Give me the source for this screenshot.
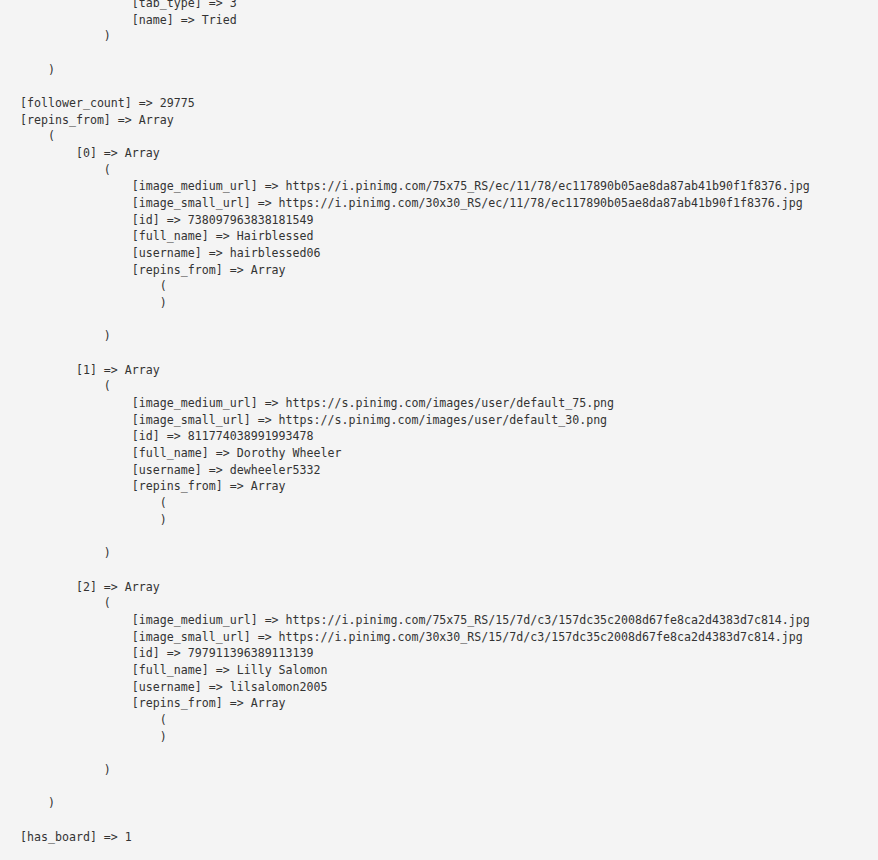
const dump = `                [tab_type] => 3
                [name] => Tried
            )

    )

[follower_count] => 29775
[repins_from] => Array
    (
        [0] => Array
            (
                [image_medium_url] => https://i.pinimg.com/75x75_RS/ec/11/78/ec117890b05ae8da87ab41b90f1f8376.jpg
                [image_small_url] => https://i.pinimg.com/30x30_RS/ec/11/78/ec117890b05ae8da87ab41b90f1f8376.jpg
                [id] => 738097963838181549
                [full_name] => Hairblessed
                [username] => hairblessed06
                [repins_from] => Array
                    (
                    )

            )

        [1] => Array
            (
                [image_medium_url] => https://s.pinimg.com/images/user/default_75.png
                [image_small_url] => https://s.pinimg.com/images/user/default_30.png
                [id] => 811774038991993478
                [full_name] => Dorothy Wheeler
                [username] => dewheeler5332
                [repins_from] => Array
                    (
                    )

            )

        [2] => Array
            (
                [image_medium_url] => https://i.pinimg.com/75x75_RS/15/7d/c3/157dc35c2008d67fe8ca2d4383d7c814.jpg
                [image_small_url] => https://i.pinimg.com/30x30_RS/15/7d/c3/157dc35c2008d67fe8ca2d4383d7c814.jpg
                [id] => 797911396389113139
                [full_name] => Lilly Salomon
                [username] => lilsalomon2005
                [repins_from] => Array
                    (
                    )

            )

    )

[has_board] => 1`;

const App = () => {
  return (
    <div className="bg-[#f4f4f4] min-h-[860px] h-[860px] overflow-hidden">
      <pre className="-mt-[5px] pl-[20px] text-[11.62px] leading-[16.67px] text-[#333333] font-['DejaVu_Sans_Mono','Liberation_Mono',monospace]">
        {dump}
      </pre>
    </div>
  );
};

export default App;
